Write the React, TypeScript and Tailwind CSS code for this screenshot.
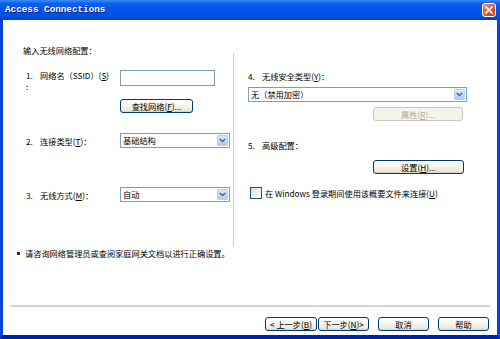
import React from "react";

const cjk = "font-['SimSun','Noto_Sans_CJK_SC',sans-serif]";

const Key = ({ k }: { k: string }) => (
    <span>
        (<u>{k}</u>)
    </span>
);

const XpButton = ({
    children,
    className = "",
    disabled = false,
}: {
    children: React.ReactNode;
    className?: string;
    disabled?: boolean;
}) => (
    <button
        disabled={disabled}
        className={`h-[14px] flex items-center justify-center rounded-[3px] border text-[8.2px] leading-none ${cjk} ${
            disabled
                ? "border-[#c9c7ba] bg-[#f5f4ea] text-[#aca899]"
                : "border-[#003c74] bg-[linear-gradient(180deg,#ffffff_0%,#f6f5f0_45%,#ece9d8_85%,#d6d0c5_100%)] text-black"
        } ${className}`}
    >
        {children}
    </button>
);

const XpSelect = ({ value, className = "" }: { value: string; className?: string }) => (
    <div className={`h-[15px] flex items-center border border-[#7f9db9] bg-white ${className}`}>
        <span className={`flex-1 pl-[2px] text-[8.2px] leading-none text-black ${cjk}`}>{value}</span>
        <div className="w-[11px] h-[11px] mr-[1px] flex items-center justify-center rounded-[1px] border border-[#b9cdf7] bg-[linear-gradient(180deg,#dbe6fd_0%,#c3d5fc_60%,#b1c7f7_100%)]">
            <svg width="7" height="5" viewBox="0 0 7 5">
                <path d="M0.8 1 L3.5 3.6 L6.2 1" fill="none" stroke="#4d6185" strokeWidth="1.4" />
            </svg>
        </div>
    </div>
);

export default function App() {
    return (
        <div className="w-[500px] h-[339px] flex flex-col bg-[#0842e0] overflow-hidden">
            {/* title bar */}
            <div className="h-[20px] shrink-0 flex items-center justify-between pl-[5px] pr-[4px] bg-[linear-gradient(180deg,#3c8cf5_0%,#0a5ef0_18%,#0056e8_50%,#0050e2_82%,#0040c6_100%)]">
                <span className="font-['Liberation_Mono',monospace] font-bold text-[9.3px] text-white [text-shadow:1px_1px_0_#0a1e7a]">
                    Access Connections
                </span>
                <div className="w-[14px] h-[14px] flex items-center justify-center rounded-[3px] border border-white bg-[linear-gradient(135deg,#f0906e_0%,#e05a33_50%,#c23c14_100%)]">
                    <svg width="8" height="8" viewBox="0 0 8 8">
                        <path d="M1 1 L7 7 M7 1 L1 7" stroke="#ffffff" strokeWidth="1.7" strokeLinecap="square" />
                    </svg>
                </div>
            </div>

            {/* client area */}
            <div className={`flex-1 flex flex-col bg-white border-l-[3px] border-r-[3px] border-b-[4px] border-l-[#0842e0] border-r-[#0842e0] border-b-[#0021a5] text-black ${cjk}`}>
                <div className="h-[24px] shrink-0" />

                <div className="h-[203px] shrink-0 flex">
                    {/* left column */}
                    <div className="w-[230px] pl-[20px] flex flex-col">
                        <div className="h-[12px] text-[8.2px] leading-[12px]">输入无线网络配置：</div>

                        <div className="mt-[14px] flex ml-[3px]">
                            <div className="w-[94px] flex text-[8.2px] leading-[11px]">
                                <div className="w-[14px] flex flex-col">
                                    <span className="h-[11px]">1.</span>
                                    <span className="h-[11px]">:</span>
                                </div>
                                <span>
                                    网络名（SSID）<Key k="S" />
                                </span>
                            </div>
                            <div className="w-[95px] h-[16px] border border-[#7f9db9] bg-white" />
                        </div>
                        <XpButton className="mt-[7px] ml-[97px] w-[73px]">
                            查找网络<Key k="F" />...
                        </XpButton>

                        <div className="mt-[20px] flex items-center ml-[3px]">
                            <div className="w-[94px] text-[8.2px] leading-[12px]">
                                <span className="inline-block w-[14px]">2.</span>连接类型<Key k="T" />：
                            </div>
                            <XpSelect value="基础结构" className="w-[110px]" />
                        </div>

                        <div className="mt-[39px] flex items-center ml-[3px]">
                            <div className="w-[94px] text-[8.2px] leading-[12px]">
                                <span className="inline-block w-[14px]">3.</span>无线方式<Key k="M" />：
                            </div>
                            <XpSelect value="自动" className="w-[110px]" />
                        </div>
                    </div>

                    {/* separator */}
                    <div className="mt-[9px] w-[2px] border-l border-l-[#d0cfc4] border-r border-r-white" />

                    {/* right column */}
                    <div className="flex-1 pl-[13px] flex flex-col">
                        <div className="mt-[26px] h-[12px] text-[8.2px] leading-[12px]">
                            <span className="inline-block w-[14px]">4.</span>无线安全类型<Key k="Y" />：
                        </div>
                        <XpSelect value="无（禁用加密）" className="mt-[5px] w-[219px]" />
                        <XpButton disabled className="mt-[5px] ml-[125px] w-[90px]">
                            属性<Key k="R" />...
                        </XpButton>

                        <div className="mt-[18px] h-[12px] text-[8.2px] leading-[12px]">
                            <span className="inline-block w-[14px]">5.</span>高级配置：
                        </div>
                        <XpButton className="mt-[9px] ml-[125px] w-[91px]">
                            设置<Key k="H" />...
                        </XpButton>

                        <div className="mt-[13px] flex items-center ml-[2px] gap-[3px]">
                            <div className="w-[12px] h-[12px] border border-[#1c5180] bg-[linear-gradient(135deg,#dcdcd7_0%,#f3f3ef_60%,#ffffff_100%)]" />
                            <span className="text-[8.2px] leading-[12px]">
                                在 Windows 登录期间使用该概要文件来连接<Key k="U" />
                            </span>
                        </div>
                    </div>
                </div>

                {/* note */}
                <div className="h-[12px] shrink-0 flex items-center pl-[14px] gap-[5px]">
                    <span className="w-[3px] h-[3px] bg-[#333]" />
                    <span className="text-[8.2px] leading-[12px]">请咨询网络管理员或查阅家庭网关文档以进行正确设置。</span>
                </div>

                <div className="mt-[46px] mx-[7px] h-[2px] shrink-0 bg-[#d6d3ca]" />

                <div className="mt-[10px] flex justify-end pr-[8px]">
                    <XpButton className="w-[52px]">
                        &lt; 上一步<Key k="B" />
                    </XpButton>
                    <XpButton className="ml-[1px] w-[51px]">
                        下一步<Key k="N" /> &gt;
                    </XpButton>
                    <XpButton className="ml-[9px] w-[51px]">取消</XpButton>
                    <XpButton className="ml-[9px] w-[51px]">帮助</XpButton>
                </div>
            </div>
        </div>
    );
}
